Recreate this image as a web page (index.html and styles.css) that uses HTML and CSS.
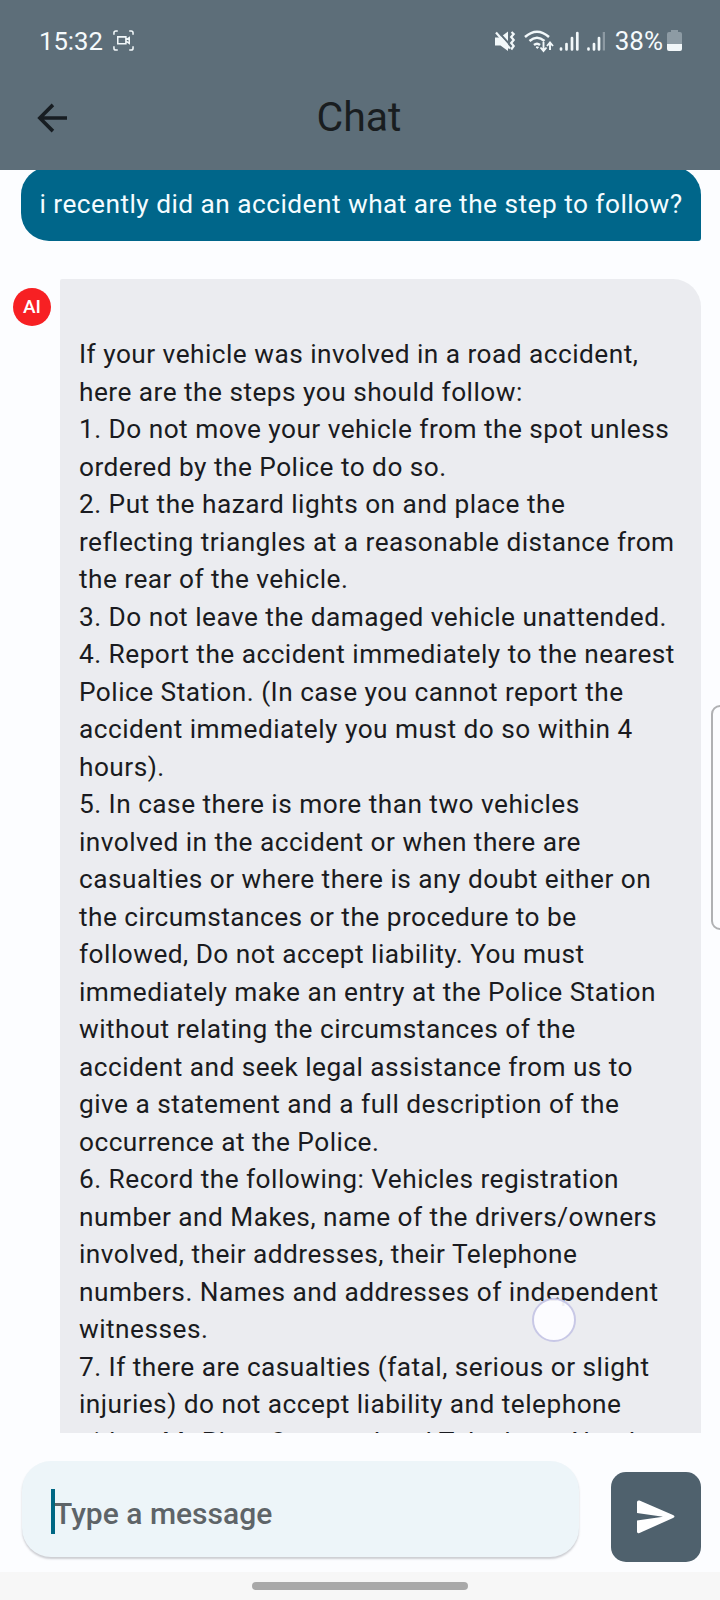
FILE: index.html
```html
<!DOCTYPE html>
<html lang="en">
<head>
<meta charset="utf-8">
<title>Chat</title>
<link rel="stylesheet" href="styles.css">
</head>
<body>
<div class="phone">
  <header class="header">
    <div class="status">
      <div class="status-left">
        <span class="clock">15:32</span>
        <svg class="record" width="21" height="21" viewBox="0 0 22 22" fill="none" stroke="#f2f8fa" stroke-width="1.6"><path d="M1 5V3Q1 1 3 1H5M17 1H19Q21 1 21 3V5M1 17V19Q1 21 3 21H5M17 21H19Q21 21 21 19V17M5 7.2H13.5V14.4H5ZM14 10L17 8V14L14 12"/></svg>
      </div>
      <svg class="signals" width="112" height="26" viewBox="493 27 112 26" fill="none" stroke="#f2f8fa">
        <path d="M495 36.500H500L508 30.500V50L500.500 44.500H495Z" fill="#f2f8fa" stroke="none"/>
        <path d="M497.500 30L512 46" stroke="#5d6e79" stroke-width="2"/>
        <path d="M496 31.500L510 47.500" stroke-width="2.200"/>
        <path d="M511.500 31l2.200 2-2.500 3 2.500 3-2.500 3 2.500 3-2.500 3.500" stroke-width="2.200"/>
        <path d="M525 36Q537 25.500 549 36M529.500 40Q537 33.500 544.500 40M534 44Q537 41.500 540 44" stroke-width="2.500"/>
        <path d="M536 46H538.500L537.300 47.500Z" fill="#f2f8fa"/>
        <path d="M543.500 41V49M540.500 46.500L543.500 50L546.500 46.500M550 49V42M547 45L550 41.500L553 45" stroke-width="1.900"/>
        <path d="M561 47.500V48.500M566.500 43V48.500M572 37V48.500M577.300 32V48.500M588.500 47.500V48.500M594 43V48.500M599 37V48.500" stroke-width="2.700" stroke-linecap="round"/>
        <path d="M604 31V49.500" stroke="#8d9aa3" stroke-width="2.500"/>
      </svg>
      <span class="percent">38%</span>
      <svg class="battery" width="15" height="22" viewBox="0 0 15 22"><path d="M4 0H11V2H13Q15 2 15 4V14H0V4Q0 2 2 2H4Z" fill="#8d9ba4"/><path d="M0 14H15V19Q15 21 13 21H2Q0 21 0 19Z" fill="#f2f7f9"/></svg>
    </div>
    <div class="appbar">
      <svg class="back" width="30" height="30" viewBox="0 0 32 32" fill="none" stroke="#171d22" stroke-width="3.8"><path d="M32 16H3M17 2L3 16L17 30"/></svg>
      <h1 class="title">Chat</h1>
    </div>
  </header>
  <main class="messages">
    <div class="bubble bubble-user">i recently did an accident what are the step to follow?</div>
    <div class="row">
      <div class="avatar">AI</div>
      <div class="bubble bubble-ai"><br>If your vehicle was involved in a road accident,<br>here are the steps you should follow:<br>1. Do not move your vehicle from the spot unless<br>ordered by the Police to do so.<br>2. Put the hazard lights on and place the<br>reflecting triangles at a reasonable distance from<br>the rear of the vehicle.<br>3. Do not leave the damaged vehicle unattended.<br>4. Report the accident immediately to the nearest<br>Police Station. (In case you cannot report the<br>accident immediately you must do so within 4<br>hours).<br>5. In case there is more than two vehicles<br>involved in the accident or when there are<br>casualties or where there is any doubt either on<br>the circumstances or the procedure to be<br>followed, Do not accept liability. You must<br>immediately make an entry at the Police Station<br>without relating the circumstances of the<br>accident and seek legal assistance from us to<br>give a statement and a full description of the<br>occurrence at the Police.<br>6. Record the following: Vehicles registration<br>number and Makes, name of the drivers/owners<br>involved, their addresses, their Telephone<br>numbers. Names and addresses of independent<br>witnesses.<br>7. If there are casualties (fatal, serious or slight<br>injuries) do not accept liability and telephone<br>either &nbsp;Mr Phan Surround and Telephone Number</div>
    </div>
    <div class="touch"></div>
  </main>
  <div class="edge-handle"></div>
  <footer class="composer">
    <div class="field"><span class="caret"></span><span class="placeholder">Type a message</span></div>
    <div class="send"><svg width="38" height="34" viewBox="0 0 38 34"><path d="M0 2Q0 0 2.500 .500L36 15Q39 16.500 36 18L2.500 33Q0 34 0 31.500V20.500L26 16.700L0 13Z" fill="#fff"/></svg></div>
  </footer>
  <nav class="nav"><div class="pill"></div></nav>
</div>
</body>
</html>
```
FILE: styles.css
```css
* { box-sizing: border-box; }
body { margin: 0; font-family: Roboto, sans-serif; }
.phone { position: relative; width: 720px; height: 1600px; overflow: hidden; display: flex; flex-direction: column; background: #fcfdff; }
.header { flex: none; height: 170px; background: #5d6e79; }
.status { height: 80px; padding: 1px 38px 0 39px; display: flex; align-items: center; color: #f5fafc; font-size: 26px; }
.status-left { flex: 1; display: flex; align-items: center; gap: 10px; }
.clock { font-size: 25.7px; }
.clock, .percent { line-height: 32px; }
.percent { margin: 0 4px 0 10px; }
.appbar { height: 75px; display: grid; grid-template-columns: 68px 1fr 70px; align-items: center; }
.back { margin-left: 37px; }
.title { margin: -2px 0 0; text-align: center; font-size: 41px; font-weight: 400; line-height: 52px; color: #191d20; }
.messages { position: relative; flex: none; height: 1263px; overflow: hidden; }
.bubble { font-size: 26.25px; line-height: 37.5px; letter-spacing: .47px; white-space: nowrap; }
.bubble-user { margin: -3px 19px 0 21px; height: 74px; padding: 19px 18.5px; color: #f4fcff; background: #00668a; border-radius: 28px 28px 3px 28px; }
.row { margin-top: 38px; display: flex; }
.avatar { flex: none; width: 38px; height: 38px; margin: 9px 9px 0 13px; border-radius: 50%; background: #f72023; color: #fff; font-size: 19px; font-weight: 500; line-height: 38px; text-align: center; }
.bubble-ai { width: 641px; height: 1300px; padding: 19.75px 19px; color: #1a1b20; background: #ebecf0; border-radius: 2px 28px 0 0; }
.touch { position: absolute; left: 532px; top: 1128px; width: 44px; height: 44px; border: 2px solid #c8c8e6; border-radius: 50%; background: rgba(253, 253, 255, .94); }
.edge-handle { position: absolute; left: 711px; top: 705px; width: 20px; height: 225px; border: 2px solid #b0b1b3; border-radius: 9px; background: #fcfdff; }
.composer { height: 139px; padding: 28px 19px 0 22px; display: flex; justify-content: space-between; }
.field { width: 557px; height: 96px; padding-left: 29px; display: flex; align-items: center; border-radius: 29px; background: #edf5f9; box-shadow: 0 2px 2px rgba(70, 70, 80, .26); }
.caret { width: 4px; height: 45px; margin-top: 5px; background: #006784; }
.placeholder { margin-left: -1px; padding-top: 9px; color: #5e6468; font-size: 30px; font-weight: 500; }
.send { width: 90px; height: 90px; margin-top: 11px; display: flex; align-items: center; justify-content: center; border-radius: 15px; background: #4f616d; }
.nav { height: 28px; padding-top: 10px; background: #f7f7f7; }
.pill { width: 216px; height: 8px; margin: 0 auto; border-radius: 4px; background: #a9a9a9; }
```
